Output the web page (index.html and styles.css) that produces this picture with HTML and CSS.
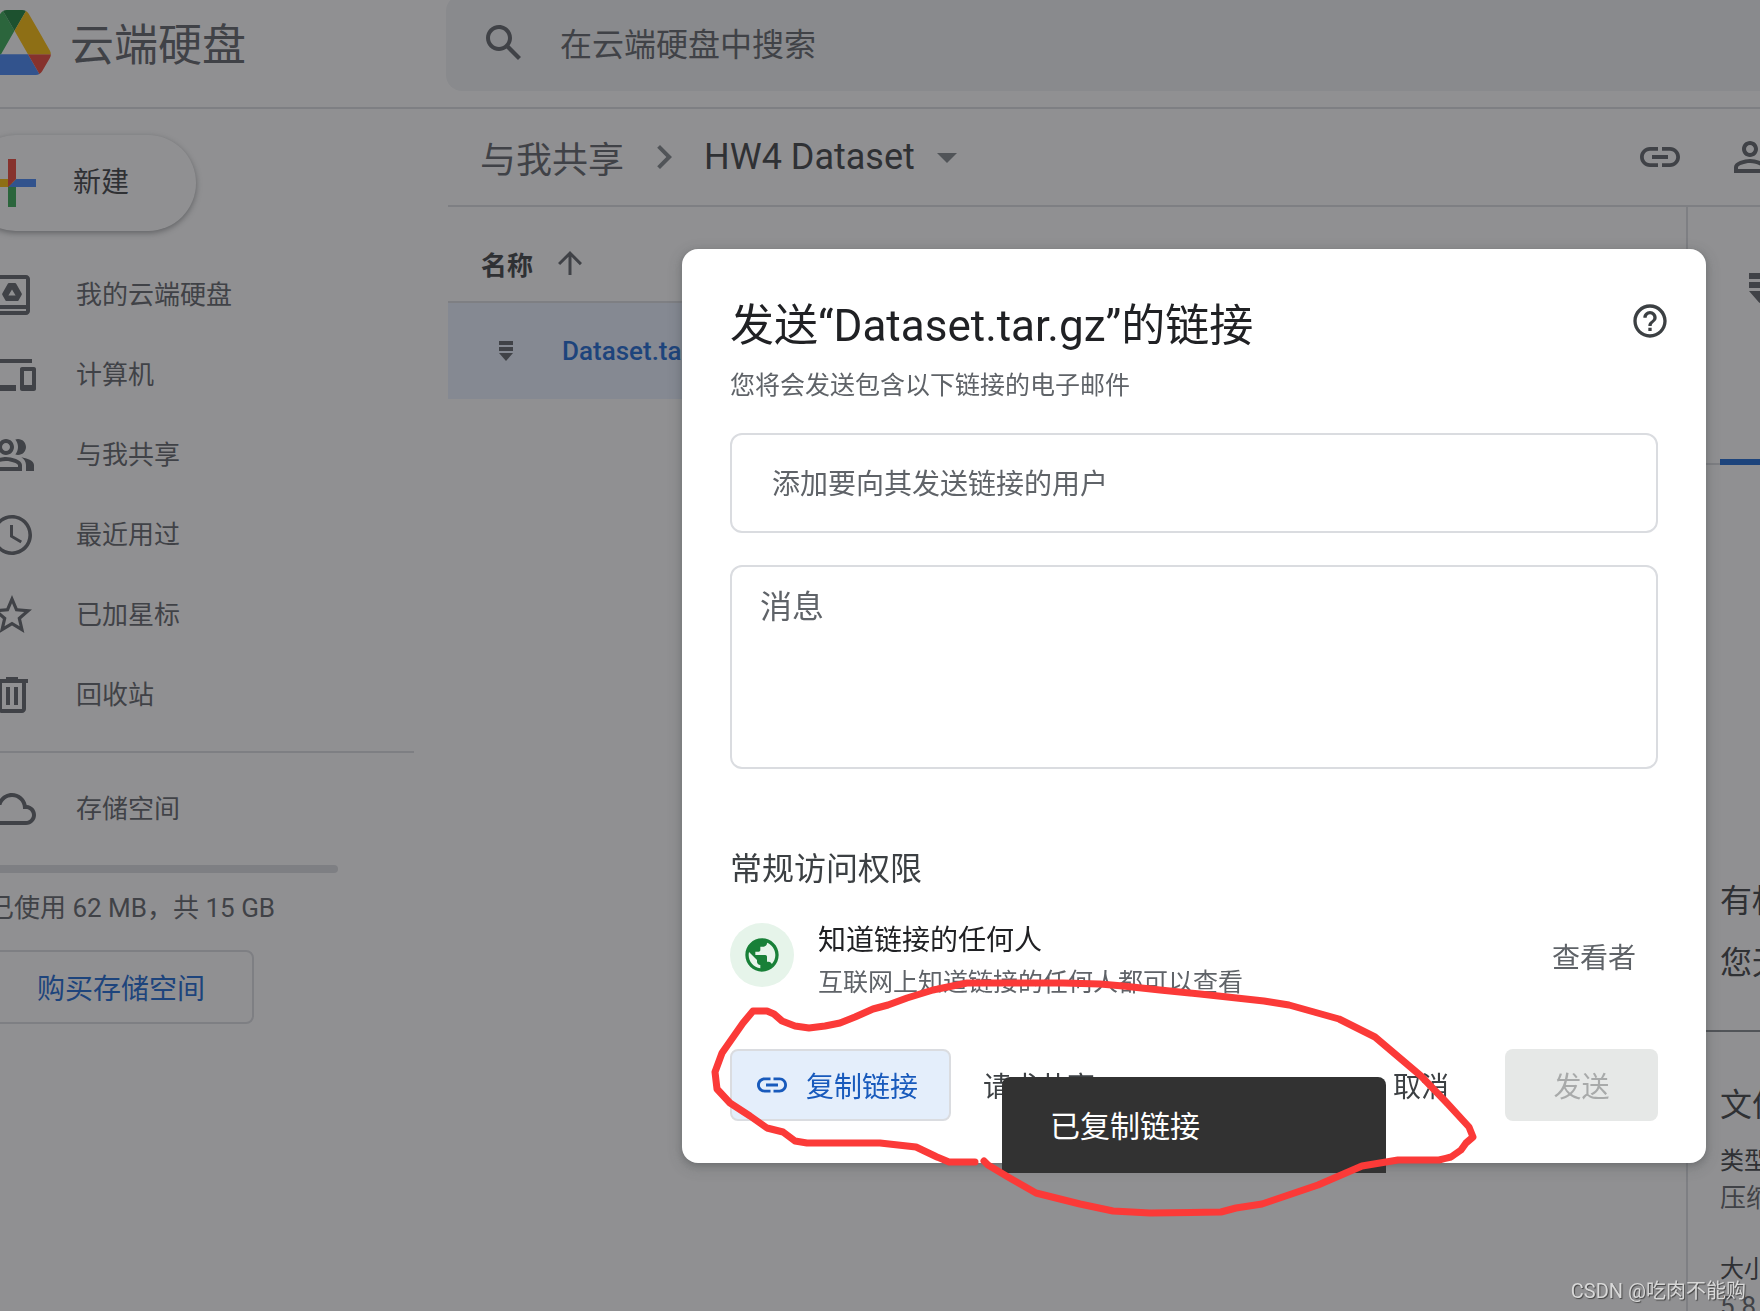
FILE: index.html
```html
<!DOCTYPE html>
<html lang="zh-CN">
<head>
<meta charset="utf-8">
<title>HW4 Dataset - 云端硬盘</title>
<link rel="stylesheet" href="styles.css">
</head>
<body>
<svg class="defs" aria-hidden="true">
  <symbol id="i-link" viewBox="0 0 24 24"><path d="M3.9 12c0-1.710 1.390-3.100 3.100-3.100h4V7H7c-2.760 0-5 2.240-5 5s2.240 5 5 5h4v-1.900H7c-1.710 0-3.100-1.390-3.100-3.100zM8 13h8v-2H8v2zm9-6h-4v1.900h4c1.710 0 3.100 1.390 3.100 3.100s-1.390 3.100-3.100 3.100h-4V17h4c2.760 0 5-2.240 5-5s-2.240-5-5-5z"/></symbol>
  <symbol id="i-archive" viewBox="0 0 14 20"><path d="M0 0h14v4H0zM0 6h14v4H0zM0 12h14l-7 8z"/></symbol>
</svg>
<div class="app">
  <header class="header">
    <a class="brand" href="#">
      <svg class="logo" viewBox="0 0 87.300 78"><path fill="#4285f4" d="m59.800 53h-59.800c0 1.550.4 3.100 1.200 4.500l9.250 16c.8 1.400 1.950 2.500 3.300 3.300 1.350.8 2.900 1.200 4.500 1.200h50.800c1.600 0 3.150-.45 4.500-1.200z"/><path fill="#34a853" d="m43.650 25-13.750-23.800c-1.350.8-2.500 1.900-3.300 3.300l-25.400 44a9.060 9.060 0 0 0-1.200 4.500h27.500z"/><path fill="#ea4335" d="m73.550 76.800c1.350-.8 2.500-1.900 3.300-3.300l9.250-16c.8-1.400 1.200-2.950 1.200-4.500h-27.500z"/><path fill="#188038" d="m43.650 25 13.750-23.800c-1.350-.8-2.900-1.200-4.500-1.200h-18.500c-1.600 0-3.150.45-4.500 1.200z"/><path fill="#fbbc04" d="m73.400 26.500-12.700-22c-.8-1.400-1.950-2.500-3.300-3.300l-13.750 23.800 16.150 28h27.450c0-1.550-.4-3.100-1.200-4.500z"/></svg>
      <span>云端硬盘</span>
    </a>
    <form class="search">
      <svg class="icon" viewBox="0 0 24 24"><path d="M20.490 19l-5.730-5.730C15.530 12.200 16 10.910 16 9.500 16 5.910 13.090 3 9.500 3S3 5.910 3 9.500 5.910 16 9.500 16c1.410 0 2.700-.47 3.770-1.240L19 20.490 20.490 19zM5 9.500C5 7.010 7.010 5 9.500 5S14 7.010 14 9.500 11.990 14 9.500 14 5 11.990 5 9.500z"/></svg>
      <input type="search" aria-label="在云端硬盘中搜索" placeholder="在云端硬盘中搜索">
    </form>
  </header>
  <div class="body">
    <aside class="sidebar">
      <button class="new" type="button">
        <svg viewBox="0 0 36 36"><path fill="#34a853" d="M16 16v14h4V20z"/><path fill="#4285f4" d="M30 16H20l-4 4h14z"/><path fill="#fbbc04" d="M6 16v4h10l4-4z"/><path fill="#ea4335" d="M20 16V6h-4v14z"/></svg>
        <span>新建</span>
      </button>
      <nav class="nav">
        <a href="#"><svg class="icon" viewBox="0 0 24 24"><path d="M19 2H5c-1.100 0-2 .9-2 2v16c0 1.100.9 2 2 2h14c1.100 0 2-.9 2-2V4c0-1.100-.9-2-2-2zm0 18H5v-1h14v1zm0-3H5V4h14v13z"/><path d="M10.500 6h3c.3 0 .5.100.6.400l2.700 4.700c.200.300.200.600 0 .9l-1.400 2.500c-.1.300-.4.500-.7.500H9.300c-.3 0-.6-.2-.7-.5l-1.400-2.500c-.2-.3-.2-.6 0-.9l2.700-4.700c.1-.3.300-.4.600-.4zM12 9.200l-1.800 3h3.600z" fill-rule="evenodd"/></svg>我的云端硬盘</a>
        <a href="#"><svg class="icon" viewBox="0 0 24 24"><path d="M4 6h18V4H4c-1.100 0-2 .9-2 2v11H0v3h14v-3H4V6zm19 2h-6c-.55 0-1 .45-1 1v10c0 .55.450 1 1 1h6c.55 0 1-.45 1-1V9c0-.55-.45-1-1-1zm-1 9h-4v-7h4v7z"/></svg>计算机</a>
        <a href="#"><svg class="icon" viewBox="0 0 24 24"><path d="M9 12c2.210 0 4-1.790 4-4s-1.790-4-4-4-4 1.790-4 4 1.790 4 4 4zm0-6c1.100 0 2 .9 2 2s-.9 2-2 2-2-.9-2-2 .9-2 2-2zM9 13c-2.670 0-8 1.340-8 4v3h16v-3c0-2.660-5.330-4-8-4zm6 5H3v-1c.2-.71 3.300-2 6-2 2.690 0 5.770 1.280 6 2v1zM15 12c2.210 0 4-1.790 4-4s-1.790-4-4-4c-.47 0-.91.100-1.330.240C14.500 5.270 15 6.580 15 8s-.5 2.730-1.330 3.760c.42.140.860.240 1.330.240zM16.670 13.130C18.040 14.060 19 15.320 19 17v3h4v-3c0-2.180-3.570-3.470-6.330-3.870z"/></svg>与我共享</a>
        <a href="#"><svg class="icon" viewBox="0 0 24 24"><path d="M11.990 2C6.470 2 2 6.480 2 12s4.470 10 9.990 10C17.520 22 22 17.520 22 12S17.520 2 11.990 2zM12 20.200c-4.530 0-8.200-3.670-8.200-8.200S7.470 3.800 12 3.800s8.200 3.670 8.200 8.200-3.670 8.200-8.200 8.200zM12.500 7H11v6l5.250 3.150.75-1.230-4.500-2.670z"/></svg>最近用过</a>
        <a href="#"><svg class="icon" viewBox="0 0 24 24"><path d="M22 9.240l-7.190-.62L12 2 9.190 8.630 2 9.240l5.460 4.730L5.820 21 12 17.270 18.180 21l-1.630-7.030L22 9.240zM12 15.400l-3.760 2.270 1-4.280-3.320-2.880 4.380-.38L12 6.100l1.710 4.040 4.380.38-3.320 2.880 1 4.280L12 15.400z"/></svg>已加星标</a>
        <a href="#"><svg class="icon" viewBox="0 0 24 24"><path d="M15 4V3H9v1H4v2h1v13c0 1.100.9 2 2 2h10c1.100 0 2-.9 2-2V6h1V4h-5zm2 15H7V6h10v13zM9 8h2v9H9zm4 0h2v9h-2z"/></svg>回收站</a>
        <hr>
        <a href="#"><svg class="icon" viewBox="0 0 24 24"><path d="M19.350 10.040C18.670 6.590 15.640 4 12 4 9.110 4 6.600 5.640 5.350 8.040 2.340 8.360 0 10.910 0 14c0 3.310 2.690 6 6 6h13c2.760 0 5-2.240 5-5 0-2.640-2.050-4.780-4.650-4.960zM19 18H6c-2.210 0-4-1.790-4-4s1.790-4 4-4h.71C7.370 7.690 9.480 6 12 6c3.040 0 5.500 2.460 5.500 5.500v.5H19c1.660 0 3 1.340 3 3s-1.340 3-3 3z"/></svg>存储空间</a>
      </nav>
      <div class="quota">
        <div class="quota-bar"></div>
        <p>已使用 62 MB，共 15 GB</p>
        <button type="button">购买存储空间</button>
      </div>
    </aside>
    <main class="main">
      <div class="toolbar">
        <a class="crumb" href="#">与我共享</a>
        <svg class="icon faint" viewBox="0 0 24 24"><path d="M10 6L8.590 7.410 13.170 12l-4.580 4.590L10 18l6-6z"/></svg>
        <button class="folder" type="button">HW4 Dataset<svg class="icon faint" viewBox="0 0 24 24"><path d="M7 10l5 5 5-5z"/></svg></button>
        <div class="tools">
          <button type="button" aria-label="获取链接"><svg class="icon"><use href="#i-link"/></svg></button>
          <button type="button" aria-label="共享"><svg class="icon" viewBox="0 0 24 24"><path d="M12 4C9.790 4 8 5.790 8 8s1.790 4 4 4 4-1.790 4-4-1.790-4-4-4zm0 6c-1.100 0-2-.9-2-2s.9-2 2-2 2 .9 2 2-.9 2-2 2zM12 13c-2.670 0-8 1.340-8 4v3h16v-3c0-2.660-5.330-4-8-4zm6 5H6v-1c.2-.71 3.300-2 6-2s5.800 1.290 6 2v1z"/></svg></button>
        </div>
      </div>
      <div class="content">
        <table class="files">
          <thead><tr><th scope="col"><div class="cell">名称<svg class="sort" viewBox="0 0 24 24"><path d="M4 12l1.410 1.410L11 7.830V20h2V7.830l5.580 5.590L20 12l-8-8z"/></svg></div></th></tr></thead>
          <tbody><tr><td><div class="cell"><svg class="archive"><use href="#i-archive"/></svg>Dataset.tar.gz</div></td></tr></tbody>
        </table>
        <aside class="details">
          <div class="tabs"><svg class="archive-big"><use href="#i-archive"/></svg><i class="tab-mark"></i></div>
          <section class="access-info"><p>有权</p><p>您无</p></section>
          <section class="file-info">
            <h2>文件</h2>
            <dl><dt>类型</dt><dd>压缩</dd><dt>大小</dt><dd>5.8</dd></dl>
          </section>
        </aside>
      </div>
    </main>
  </div>
</div>

<div class="scrim">
  <form class="dialog" role="dialog" aria-labelledby="dlg-title">
    <div class="dialog-head">
      <h1 id="dlg-title">发送“Dataset.tar.gz”的链接</h1>
      <button class="help" type="button" aria-label="帮助"><svg viewBox="0 0 24 24"><path d="M11 18h2v-2h-2v2zm1-16C6.480 2 2 6.480 2 12s4.480 10 10 10 10-4.480 10-10S17.520 2 12 2zm0 18c-4.410 0-8-3.590-8-8s3.590-8 8-8 8 3.590 8 8-3.590 8-8 8zm0-14c-2.210 0-4 1.790-4 4h2c0-1.100.9-2 2-2s2 .9 2 2c0 2-3 1.750-3 5h2c0-2.250 3-2.500 3-5 0-2.210-1.790-4-4-4z"/></svg></button>
    </div>
    <p class="lead">您将会发送包含以下链接的电子邮件</p>
    <input class="people" type="text" aria-label="添加要向其发送链接的用户" placeholder="添加要向其发送链接的用户">
    <textarea class="message" aria-label="消息" placeholder="消息"></textarea>
    <h2>常规访问权限</h2>
    <div class="access">
      <span class="globe"><svg viewBox="0 0 24 24"><path d="M12 2C6.480 2 2 6.480 2 12s4.480 10 10 10 10-4.480 10-10S17.520 2 12 2zm-1 17.930c-3.950-.49-7-3.850-7-7.930 0-.62.080-1.210.21-1.790L9 15v1c0 1.100.9 2 2 2v1.930zm6.900-2.540c-.26-.81-1-1.390-1.900-1.390h-1v-3c0-.55-.45-1-1-1H8v-2h2c.55 0 1-.45 1-1V7h2c1.100 0 2-.9 2-2v-.41c2.930 1.190 5 4.060 5 7.410 0 2.080-.8 3.970-2.100 5.390z"/></svg></span>
      <div class="access-text"><p class="who">知道链接的任何人</p><p class="note">互联网上知道链接的任何人都可以查看</p></div>
      <span class="role">查看者</span>
    </div>
    <div class="actions">
      <button class="copy" type="button"><svg><use href="#i-link"/></svg>复制链接</button>
      <button class="plain request" type="button">请求共享</button>
      <button class="plain cancel" type="button">取消</button>
      <button class="send" type="submit" disabled>发送</button>
    </div>
    <div class="toast" role="status">已复制链接</div>
    <svg class="scribble" viewBox="682 963 1024 260" aria-hidden="true">
      <path d="M975 1162L949 1162 937 1157 916 1147 880 1143H807L795 1141 783 1132 767 1128 750 1116 730 1103 717 1089 715 1072 722 1053 743 1023 753 1011H767L774 1014 782 1021 795 1026 809 1028 825 1026 840 1023 855 1017 873 1009 888 1005 907 998 933 990 967 983H1063L1100 984 1123 986 1160 990 1200 994 1264 1001 1289 1005 1339 1019 1375 1037 1421 1076 1446 1102 1469 1127 1473 1137 1466 1143 1461 1150 1451 1157 1439 1160H1398L1362 1166 1318 1185 1262 1204 1236 1208 1221 1212 1150 1213 1113 1211 1080 1204 1036 1193 1008 1177 988 1165 984 1161" pathLength="1000"/>
    </svg>
  </form>
</div>
<div class="watermark">CSDN @吃肉不能购</div>
</body>
</html>
```
FILE: styles.css
```css
* { box-sizing: border-box; }
body, h1, h2, p, dl, dd { margin: 0; }
h1, h2 { font-weight: 400; }
body {
  background: #fff;
  color: #5f6368;
  font-family: Roboto, "Noto Sans CJK SC", sans-serif;
  font-size: 26px;
  overflow: hidden;
}
button, input, textarea { font-family: inherit; margin: 0; }
button { border: 0; background: none; padding: 0; color: inherit; white-space: nowrap; }
a { color: inherit; text-decoration: none; }
svg { display: block; flex: none; fill: currentColor; }
.defs { position: absolute; width: 0; height: 0; }
.icon { width: 48px; height: 48px; }
.faint { color: #80868b; }

/* The shell starts a little to the left of the window edge */
.app { margin-left: -32px; min-height: 100vh; display: flex; flex-direction: column; }

.header { display: flex; align-items: flex-start; height: 109px; border-bottom: 2px solid #dadce0; }
.brand { flex: 0 0 478px; height: 84px; padding-left: 10px; display: flex; align-items: center; gap: 19px; font-size: 44px; }
.logo { width: 73px; height: 65px; }
.search { flex: 1; height: 96px; margin-top: -5px; padding-left: 34px; display: flex; align-items: center; gap: 32px; background: #f1f3f4; border-radius: 16px 0 0 16px; }
.search input { flex: 1; border: 0; padding: 4px 0 0; background: none; font-size: 32px; line-height: 48px; outline: 0; }
::placeholder { color: #5f6368; opacity: 1; }

.body { flex: 1; display: flex; }
.sidebar { flex: 0 0 480px; padding-top: 26px; }
.new { display: flex; align-items: center; gap: 25px; width: 228px; height: 96px; padding-left: 8px; border-radius: 48px; background: #fff; color: #3c4043; font-size: 28px; line-height: 40px; box-shadow: 0 2px 4px rgba(60,64,67,.3), 0 2px 6px 2px rgba(60,64,67,.15); }
.new svg { width: 72px; height: 72px; }
.nav { padding-top: 24px; line-height: 40px; }
.nav a { display: flex; align-items: center; gap: 40px; height: 80px; padding-left: 20px; }
.nav hr { width: 446px; height: 2px; margin: 16px 0; border: 0; background: #dadce0; }
.quota { padding: 16px 0 0 20px; }
.quota-bar { width: 350px; height: 8px; border-radius: 4px; background: #dadce0; }
.quota p { margin: 15px 0 22px; line-height: 40px; }
.quota button { width: 266px; height: 74px; border: 2px solid #dadce0; border-radius: 8px; color: #1967d2; font-size: 28px; }

.main { flex: 1; min-width: 0; display: flex; flex-direction: column; }
.toolbar { display: flex; align-items: center; height: 98px; padding-left: 32px; border-bottom: 2px solid #dadce0; font-size: 36px; }
.crumb { margin-right: 16px; }
.folder { display: flex; align-items: center; gap: 8px; margin-left: 16px; color: #3c4043; font-size: 36px; line-height: 48px; }
.tools { display: flex; gap: 42px; margin: 0 -14px 0 auto; }
.content { flex: 1; display: flex; align-items: stretch; }
.files { flex: 1; align-self: flex-start; border-collapse: collapse; }
.files thead, .files tbody, .files tr, .files th, .files td { display: block; padding: 0; text-align: left; }
.cell { display: flex; align-items: center; height: 96px; }
.files th .cell { gap: 19px; padding: 18px 0 0 33px; border-bottom: 2px solid #dadce0; color: #3c4043; font-weight: 700; }
.files td .cell { gap: 49px; padding-left: 51px; background: #e8f0fe; color: #1967d2; font-weight: 500; }
.sort { width: 36px; height: 36px; color: #5f6368; }
.archive { width: 14px; height: 20px; color: #5f6368; }
.details { flex: 0 0 74px; border-left: 2px solid #dadce0; overflow: hidden; white-space: nowrap; color: #3c4043; }
.tabs { display: flex; flex-direction: column; justify-content: space-between; height: 258px; padding-top: 66px; border-bottom: 2px solid #dadce0; }
.archive-big { width: 21px; height: 30px; margin-left: 61px; color: #5f6368; }
.tab-mark { height: 6px; margin: 0 0 -2px 32px; background: #1967d2; }
.access-info { padding: 416px 0 47px 32px; border-bottom: 2px solid #80868b; font-size: 32px; line-height: 40px; }
.access-info p + p { margin-top: 22px; }
.file-info { padding: 53px 0 0 32px; height: 279px; overflow: hidden; }
.file-info h2 { font-size: 32px; line-height: 40px; margin-bottom: 20px; }
.file-info dt { font-size: 24px; line-height: 32px; }
.file-info dd { margin: 5px 0 39px; color: #5f6368; line-height: 32px; }

.scrim { position: fixed; inset: 0; padding: 249px 54px 0 0; display: flex; justify-content: flex-end; align-items: flex-start; background: rgba(33,33,37,.5); }
.dialog { position: relative; width: 1024px; max-width: 100%; padding: 48px 48px 42px; border-radius: 16px; background: #fff; box-shadow: 0 2px 6px rgba(60,64,67,.3), 0 4px 12px 4px rgba(60,64,67,.15); }
.dialog-head { display: flex; justify-content: space-between; align-items: flex-start; color: #202124; }
.dialog h1 { font-size: 44px; line-height: 58px; }
.help { margin: 4px -12px 0 0; color: #3c4043; }
.help svg { width: 40px; height: 40px; }
.lead { margin: 15px 0 31px; font-size: 25px; line-height: 32px; }
.people, .message { display: block; width: 100%; border: 2px solid #dadce0; border-radius: 12px; background: #fff; outline: 0; resize: none; }
.people { height: 100px; padding: 2px 40px 0; font-size: 28px; }
.message { height: 204px; margin-top: 32px; padding: 16px 28px; font-size: 32px; line-height: 48px; }
.dialog h2 { margin: 80px 0 34px; color: #3c4043; font-size: 32px; line-height: 40px; }
.access { display: flex; gap: 24px; }
.globe { display: grid; place-items: center; width: 64px; height: 64px; border-radius: 50%; background: #e6f4ea; color: #188038; }
.globe svg { width: 40px; height: 40px; }
.who { color: #202124; font-size: 28px; line-height: 36px; }
.note { margin-top: 8px; font-size: 25px; line-height: 32px; }
.role { margin-left: auto; padding: 18px 22px 0 0; font-size: 28px; line-height: 36px; }
.actions { display: flex; align-items: center; margin-top: 50px; color: #3c4043; }
.actions button { height: 72px; border-radius: 8px; font-size: 28px; }
.actions .copy { display: flex; align-items: center; gap: 16px; width: 221px; padding-left: 22px; border: 2px solid #dadce0; background: #e4eefb; color: #185abc; }
.copy svg { width: 36px; height: 36px; }
.request { margin-left: 32px; }
.cancel { margin-left: auto; }
.actions .send { width: 153px; margin-left: 56px; border-radius: 8px; background: #e6e8e7; color: #a8aaaa; }
.toast { position: absolute; left: 320px; bottom: -10px; width: 384px; height: 96px; padding: 2px 48px 0; border-radius: 8px 8px 0 0; background: #323232; color: #fff; font-size: 30px; line-height: 96px; }
.scribble { position: absolute; left: 0; bottom: -60px; width: 1024px; height: 260px; fill: none; stroke: #fb3a38; stroke-width: 7px; stroke-linejoin: round; stroke-linecap: round; pointer-events: none; }
.watermark { position: fixed; right: 14px; bottom: 5px; color: #d8d8d8; font-size: 20px; line-height: 30px; text-shadow: 1px 1px 1px #444; }
```
